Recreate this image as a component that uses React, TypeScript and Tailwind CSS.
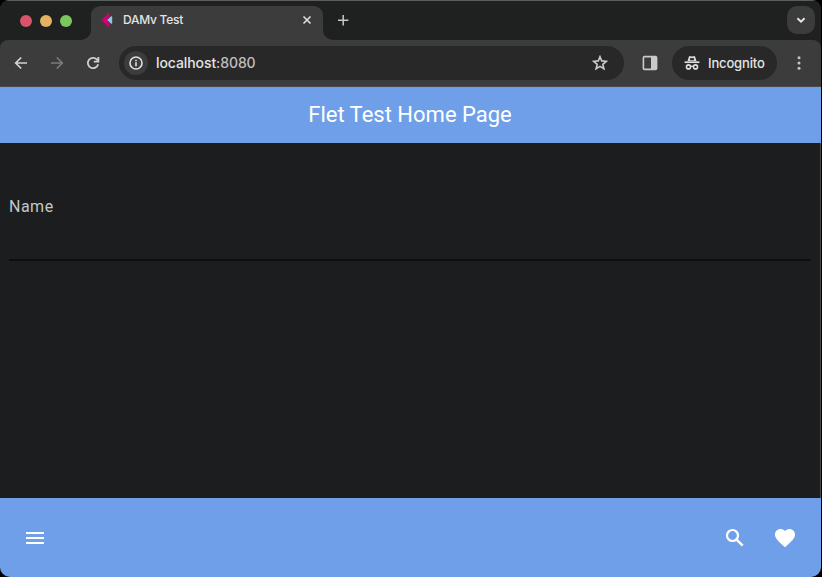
import React from "react";
import { MdMenu, MdFavorite } from "react-icons/md";

function TabFoot({ side }: { side: "left" | "right" }) {
  return (
    <div className="h-[10px] w-[10px] self-end bg-[#3c3c3c]">
      <div className={side === "left" ? "h-full w-full rounded-br-[10px] bg-[#1f2120]" : "h-full w-full rounded-bl-[10px] bg-[#1f2120]"} />
    </div>
  );
}

function TabStrip() {
  return (
    <div className="flex h-10 shrink-0 border-t border-[#5b5e5d] bg-[#1f2120]">
      <div className="flex w-[81px] items-center gap-2 pl-5">
        <span className="h-3 w-3 rounded-full bg-[#d9536a]" />
        <span className="h-3 w-3 rounded-full bg-[#e5b35f]" />
        <span className="h-3 w-3 rounded-full bg-[#7bc75f]" />
      </div>
      <TabFoot side="left" />
      <div className="mt-[5px] flex w-[232px] rounded-t-[9px] bg-[#3c3c3c] pb-[6px] pl-[10px] pr-[11px]">
        <div className="flex w-full items-center">
          <svg className="h-4 w-3" viewBox="0 0 12 16">
            <path d="M.5 8 6.8 1.4Q8.2.6 8.2 2v3L6 8l2.2 3v3q0 1.4-1.4.6Z" fill="#cf0070" />
            <path d="M6.2 8 9.8 4.4q1.4-.8 1.4.8v5.6q0 1.6-1.4.8Z" fill="#8cc6ea" />
          </svg>
          <span className="ml-[10px] flex-1 whitespace-nowrap text-[12px] font-medium leading-4 tracking-[-0.25px] text-[#e4e4e4]">DAMv Test</span>
          <svg className="h-[10px] w-[10px]" viewBox="0 0 10 10" stroke="#dedede" strokeWidth="1.6">
            <path d="m1.5 1.5 7 7M8.5 1.5l-7 7" />
          </svg>
        </div>
      </div>
      <TabFoot side="right" />
      <div className="flex flex-1 items-center pb-px pl-[5px]">
        <svg className="h-[11px] w-[11px]" viewBox="0 0 11 11" stroke="#c8c8c8" strokeWidth="1.5">
          <path d="M5.2 0v10.4M0 5.2h10.4" />
        </svg>
      </div>
      <div className="mr-[6px] mt-[5px] flex h-7 w-7 items-center justify-center rounded-[10px] bg-[#3c3c3c]">
        <svg className="h-[10px] w-[10px]" viewBox="0 0 10 10" fill="none" stroke="#e6e6e6" strokeWidth="1.9">
          <path d="m1.4 3.2 3.6 3.4 3.6-3.4" />
        </svg>
      </div>
    </div>
  );
}

function Toolbar() {
  return (
    <div className="shrink-0 bg-[#1f2120]">
      <div className="flex h-[47px] items-center rounded-t-[8px] border-b border-[#4a4a4a] bg-[#3c3c3c] pl-[13px]">
        <svg className="h-4 w-4" viewBox="0 0 16 16" fill="none" stroke="#d2d2d2" strokeWidth="1.7">
          <path d="M14 8H3M8.2 2.5 2.7 8l5.5 5.5" />
        </svg>
        <svg className="ml-5 h-4 w-4" viewBox="0 0 16 16" fill="none" stroke="#7b7b7b" strokeWidth="1.7">
          <path d="M2 8h11M7.8 2.5 13.3 8l-5.5 5.5" />
        </svg>
        <svg className="ml-5 h-4 w-4" viewBox="0 0 16 16" fill="none" stroke="#d0d0d0" strokeWidth="1.8">
          <path d="M13.1 9.2A5.2 5.2 0 1 1 11.8 4.4L13 5.7M13.4 2v4.6H8.8" />
        </svg>
        <div className="ml-[18px] flex h-[34px] w-[505px] items-center rounded-full bg-[#282828] pl-[5px] pr-4">
          <span className="flex h-6 w-6 items-center justify-center rounded-full bg-[#3c3c3c]">
            <svg className="h-[14px] w-[14px]" viewBox="0 0 14 14" fill="none" stroke="#e0e0e0" strokeWidth="1.6">
              <circle cx="7" cy="7" r="6" />
              <path d="M7 6.3v4M7 3.7v1.5" />
            </svg>
          </span>
          <span className="ml-2 flex-1 pb-px text-[14px] font-medium tracking-[-0.09px] text-[#e4e4e4]">
            localhost<span className="text-[#c0c0c0]">:8080</span>
          </span>
          <svg className="h-4 w-4" viewBox="0 0 16 16" fill="none" stroke="#cbcbcb" strokeWidth="1.6">
            <path d="m8 1.7 1.7 4.2 4.7.4-3.6 3 1.1 4.5L8 11.4l-3.9 2.4 1.1-4.5-3.6-3 4.7-.4Z" />
          </svg>
        </div>
        <svg className="ml-[18px] h-4 w-4" viewBox="0 0 16 16">
          <rect x="1.4" y="1.6" width="13.2" height="12.8" rx="1.2" fill="none" stroke="#cacaca" strokeWidth="1.6" />
          <path d="M9 1.5h5v13H9z" fill="#cacaca" />
        </svg>
        <div className="ml-[14px] flex h-[34px] w-[105px] items-center rounded-full bg-[#282828] pl-3">
          <svg className="h-4 w-4" viewBox="0 0 16 16" fill="none">
            <path d="m3.5 6 1.4-4.2Q5.2.8 6.3 1.2L8 1.6l1.7-.4q1.1-.4 1.4.6L12.5 6Z" fill="#e0e0e0" />
            <path d="m5.7 5.3.8-2.5 1.5.4 1.5-.4.8 2.5Z" fill="#282828" />
            <path d="M.6 7.2h14.8" stroke="#e0e0e0" strokeWidth="1.7" />
            <circle cx="4.5" cy="11.9" r="2" stroke="#e0e0e0" strokeWidth="1.6" />
            <circle cx="11.5" cy="11.9" r="2" stroke="#e0e0e0" strokeWidth="1.6" />
            <path d="M6.4 11.6q1.6-1 3.2 0" stroke="#e0e0e0" strokeWidth="1.3" />
          </svg>
          <span className="ml-2 text-[13px] font-medium leading-4 tracking-[-0.15px] text-[#e4e4e4]">Incognito</span>
        </div>
        <svg className="ml-[14px] h-4 w-4" viewBox="0 0 16 16" fill="#c6c6c6">
          <circle cx="8" cy="2.8" r="1.5" />
          <circle cx="8" cy="8" r="1.5" />
          <circle cx="8" cy="13.2" r="1.5" />
        </svg>
      </div>
    </div>
  );
}

export default function App() {
  return (
    <div className="h-[577px] w-[822px] bg-black pr-px font-['Inter','Liberation_Sans',sans-serif]">
      <div className="flex h-full flex-col overflow-hidden rounded-b-[10px] rounded-t-[9px] bg-[#1b1d1e]">
        <TabStrip />
        <Toolbar />
        <header className="flex h-14 shrink-0 items-center justify-center bg-[#6f9fe8] pb-px pr-px">
          <h1 className="font-['Roboto',sans-serif] text-[22px] leading-7 text-white">Flet Test Home Page</h1>
        </header>
        <main className="flex-1 border-r border-[#4a4b4c] pl-[9px] pr-[9px] pt-[51px]">
          <div className="h-[67px] border-b-2 border-[#0e0f10] pt-px">
            <label className="block font-['Roboto',sans-serif] text-[16px] leading-6 tracking-[0.5px] text-[#c4c6cc]">Name</label>
          </div>
        </main>
        <footer className="flex h-[79px] shrink-0 items-center bg-[#6f9fe8] pl-[23px] pr-6 text-white">
          <MdMenu className="h-6 w-6" />
          <svg className="ml-auto h-6 w-6" viewBox="0 0 24 24" fill="none" stroke="currentColor">
            <circle cx="9.5" cy="9.5" r="5.5" strokeWidth="2.2" />
            <path d="m13.6 13.6 6.1 6.1" strokeWidth="2.4" />
          </svg>
          <MdFavorite className="ml-[26px] h-6 w-6" />
        </footer>
      </div>
    </div>
  );
}
